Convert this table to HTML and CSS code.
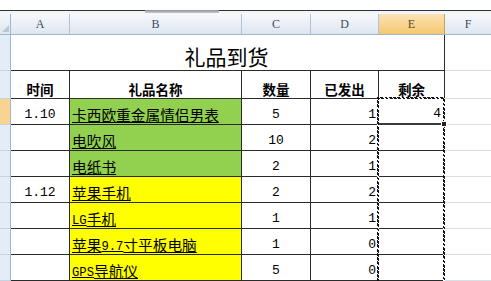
FILE: index.html
```html
<!DOCTYPE html>
<html>
<head>
<meta charset="utf-8">
<link rel="stylesheet" href="styles.css">
</head>
<body>
<div class="topstrip"><div class="thumb"></div></div>
<div class="sheet">
  <div class="corner"><span class="tri"></span></div>
  <div class="ch">A</div>
  <div class="ch">B</div>
  <div class="ch">C</div>
  <div class="ch">D</div>
  <div class="ch sel">E</div>
  <div class="ch last">F</div>

  <div class="rh"></div>
  <div class="title">礼品到货</div>
  <div class="f"></div>

  <div class="rh"></div>
  <div class="c hd">时间</div>
  <div class="c hd">礼品名称</div>
  <div class="c hd">数量</div>
  <div class="c hd">已发出</div>
  <div class="c hd">剩余</div>
  <div class="f"></div>

  <div class="rh sel"></div>
  <div class="c num ctr">1.10</div>
  <div class="c name green">卡西欧重金属情侣男表</div>
  <div class="c num ctr">5</div>
  <div class="c num rt">1</div>
  <div class="c num rt active">4</div>
  <div class="f"></div>

  <div class="rh"></div>
  <div class="c num ctr"></div>
  <div class="c name green">电吹风</div>
  <div class="c num ctr">10</div>
  <div class="c num rt">2</div>
  <div class="c num rt"></div>
  <div class="f"></div>

  <div class="rh"></div>
  <div class="c num ctr"></div>
  <div class="c name green">电纸书</div>
  <div class="c num ctr">2</div>
  <div class="c num rt">1</div>
  <div class="c num rt"></div>
  <div class="f"></div>

  <div class="rh"></div>
  <div class="c num ctr">1.12</div>
  <div class="c name yellow">苹果手机</div>
  <div class="c num ctr">2</div>
  <div class="c num rt">2</div>
  <div class="c num rt"></div>
  <div class="f"></div>

  <div class="rh"></div>
  <div class="c num ctr"></div>
  <div class="c name yellow"><span class="lat">LG</span>手机</div>
  <div class="c num ctr">1</div>
  <div class="c num rt">1</div>
  <div class="c num rt"></div>
  <div class="f"></div>

  <div class="rh"></div>
  <div class="c num ctr"></div>
  <div class="c name yellow">苹果<span class="lat">9.7</span>寸平板电脑</div>
  <div class="c num ctr">1</div>
  <div class="c num rt">0</div>
  <div class="c num rt"></div>
  <div class="f"></div>

  <div class="rh"></div>
  <div class="c num ctr"></div>
  <div class="c name yellow"><span class="lat">GPS</span>导航仪</div>
  <div class="c num ctr">5</div>
  <div class="c num rt">0</div>
  <div class="c num rt"></div>
  <div class="f"></div>

  <div class="ants"></div>
  <div class="handle"></div>
</div>
</body>
</html>
```
FILE: styles.css
```css
html, body {
  margin: 0;
  padding: 0;
  background: #fff;
  overflow: hidden;
}
body {
  width: 491px;
  height: 281px;
  font-family: "Noto Sans CJK SC", "Noto Sans", sans-serif;
  color: #000;
}
.topstrip {
  height: 14px;
  box-sizing: border-box;
  padding-top: 10px;
  display: flex;
  background: linear-gradient(#fff 0 10px, #2f3338 10px 11px, #f2f4f7 11px);
}
.thumb {
  margin-left: 145px;
  width: 74px;
  height: 3px;
  background: linear-gradient(#8c8f94, #c9ccd1);
}
.sheet {
  position: relative;
  display: grid;
  grid-template-columns: 11px 59px 172px 69px 68px 66px 1fr;
  grid-template-rows: 21px 36px 28px repeat(7, 26px);
  height: 267px;
  overflow: hidden;
}
.sheet > div {
  box-sizing: border-box;
}
.corner {
  position: relative;
  background: linear-gradient(#f3f6fa, #dfe7f1);
  border-right: 1px solid #9eb6ce;
  border-bottom: 1px solid #9eb6ce;
  display: flex;
  align-items: flex-end;
  justify-content: flex-end;
}
.tri {
  width: 0;
  height: 0;
  margin: 0 1px 2px 0;
  border-left: 7px solid transparent;
  border-bottom: 7px solid #b8c6d8;
}
.ch {
  background: linear-gradient(#f7f9fc, #dde6f1);
  border-right: 1px solid #b1c3d8;
  border-bottom: 1px solid #9eb6ce;
  font-family: "Liberation Serif", serif;
  font-size: 12px;
  color: #3e4b5c;
  display: flex;
  align-items: center;
  justify-content: center;
  padding-top: 1px;
}
.ch.sel {
  background: linear-gradient(#fbe3b6, #f5c86f);
  border-right-color: #c9a35b;
  color: #5a4a2a;
}
.ch.last {
  border-right: none;
}
.rh {
  background: #e4ecf7;
  border-right: 1px solid #9eb6ce;
  border-bottom: 1px solid #c5d3e3;
}
.rh.sel {
  background: #f8d493;
}
.title {
  grid-column: 2 / 7;
  border-right: 1px solid #2b2b2b;
  border-bottom: 1px solid #2b2b2b;
  display: flex;
  align-items: flex-end;
  justify-content: center;
  font-size: 21px;
  line-height: 1;
  padding-bottom: 3px;
  padding-right: 2px;
}
.f {
  border-bottom: 1px solid #dadfe7;
}
.c {
  border-right: 1px solid #2b2b2b;
  border-bottom: 1px solid #2b2b2b;
  display: flex;
  align-items: flex-end;
  line-height: 1;
}
.hd {
  justify-content: center;
  font-weight: 700;
  font-size: 13.5px;
  padding-bottom: 2px;
}
.num {
  font-family: "Liberation Mono", monospace;
  font-size: 13px;
  padding-bottom: 3px;
}
.ctr {
  justify-content: center;
}
.rt {
  justify-content: flex-end;
  padding-right: 2px;
}
.name {
  font-size: 14.7px;
  padding-left: 2px;
  padding-bottom: 1px;
  text-decoration: underline;
  text-underline-offset: 1px;
}
.lat {
  font-family: "Liberation Mono", monospace;
  font-size: 12.2px;
}
.green {
  background: #92d050;
}
.yellow {
  background: #ffff00;
}
.active {
  border-bottom: 2px solid #3a3a3a;
  padding-right: 3px;
}
.ants {
  position: absolute;
  top: 83px;
  left: 377px;
  width: 68px;
  bottom: -4px;
  box-sizing: border-box;
  border: 2px solid transparent;
  border-image: repeating-linear-gradient(45deg, #111 0 2px, #fff 2px 3px) 2;
  pointer-events: none;
}
.handle {
  position: absolute;
  top: 107px;
  left: 441px;
  width: 6px;
  height: 6px;
  box-sizing: border-box;
  background: #222;
  border: 1px solid #fff;
  border-radius: 1px;
}
```
